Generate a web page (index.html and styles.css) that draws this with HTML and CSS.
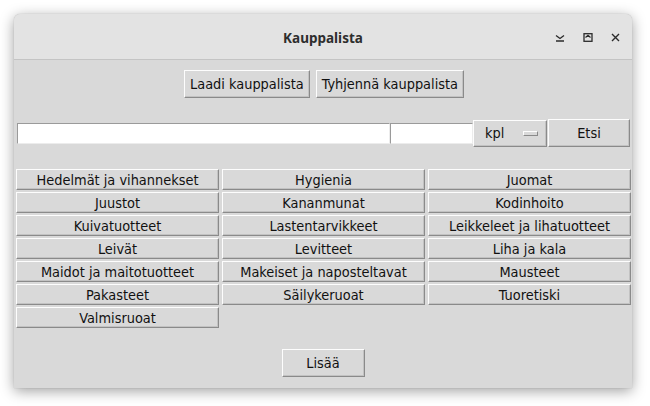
FILE: index.html
```html
<!DOCTYPE html>
<html>
<head>
<meta charset="utf-8">
<link rel="stylesheet" href="styles.css">
</head>
<body>
<div class="window">
  <div class="titlebar">
    <div class="title">Kauppalista</div>
    <div class="controls">
      <svg class="ctl" width="10" height="8" viewBox="0 0 10 8"><path d="M1 1.5 L5 4.5 L9 1.5 M1 7 H9" fill="none" stroke="#2b2b2b" stroke-width="1.3"/></svg>
      <svg class="ctl" width="10" height="9" viewBox="0 0 10 9"><rect x="1" y="0.7" width="8" height="7.6" fill="none" stroke="#2b2b2b" stroke-width="1.3"/><path d="M2.5 4.5 L5 2.2 L7.5 4.5" fill="none" stroke="#2b2b2b" stroke-width="1.2"/></svg>
      <svg class="ctl" width="9" height="9" viewBox="0 0 9 9"><path d="M1 1 L8 8 M8 1 L1 8" fill="none" stroke="#2b2b2b" stroke-width="1.4"/></svg>
    </div>
  </div>
  <div class="content">
    <div class="toprow">
      <button class="btn tall">Laadi kauppalista</button>
      <button class="btn tall">Tyhjennä kauppalista</button>
    </div>
    <div class="searchrow">
      <input class="entry e1" type="text">
      <input class="entry e2" type="text">
      <div class="btn menubtn"><span>kpl</span><span class="ind"></span></div>
      <button class="btn etsi">Etsi</button>
    </div>
    <div class="grid">
      <button class="btn cat">Hedelmät ja vihannekset</button>
      <button class="btn cat">Hygienia</button>
      <button class="btn cat">Juomat</button>
      <button class="btn cat">Juustot</button>
      <button class="btn cat">Kananmunat</button>
      <button class="btn cat">Kodinhoito</button>
      <button class="btn cat">Kuivatuotteet</button>
      <button class="btn cat">Lastentarvikkeet</button>
      <button class="btn cat">Leikkeleet ja lihatuotteet</button>
      <button class="btn cat">Leivät</button>
      <button class="btn cat">Levitteet</button>
      <button class="btn cat">Liha ja kala</button>
      <button class="btn cat">Maidot ja maitotuotteet</button>
      <button class="btn cat">Makeiset ja naposteltavat</button>
      <button class="btn cat">Mausteet</button>
      <button class="btn cat">Pakasteet</button>
      <button class="btn cat">Säilykeruoat</button>
      <button class="btn cat">Tuoretiski</button>
      <button class="btn cat">Valmisruoat</button>
    </div>
    <div class="bottomrow">
      <button class="btn tall lisaa">Lisää</button>
    </div>
  </div>
</div>
</body>
</html>
```

FILE: styles.css
```css
html, body {
  margin: 0;
  padding: 0;
  background: #ffffff;
}
body {
  padding: 14px 0 0 14px;
  width: 650px;
  height: 406px;
  box-sizing: border-box;
  overflow: hidden;
}
.window {
  width: 618px;
  height: 374px;
  background: #d9d9d9;
  border-radius: 6px 6px 0 0;
  box-shadow: 0 3px 14px rgba(0,0,0,0.38), 0 0 1px rgba(0,0,0,0.3);
  display: flex;
  flex-direction: column;
  overflow: hidden;
}
.titlebar {
  height: 46px;
  flex: none;
  background: #e3e3e3;
  border-bottom: 1px solid #c4c4c4;
  box-sizing: border-box;
  position: relative;
  display: flex;
  align-items: center;
  justify-content: center;
}
.title {
  font-family: "Noto Sans", sans-serif;
  font-weight: bold;
  font-size: 13.5px;
  color: #2e2e2e;
  margin-top: 2px;
}
.controls {
  position: absolute;
  right: 12px;
  top: 19px;
  display: flex;
  align-items: center;
  gap: 18px;
}
.ctl { display: block; }
.content {
  flex: 1;
  display: flex;
  flex-direction: column;
  font-family: "DejaVu Sans", sans-serif;
  font-stretch: condensed;
  font-size: 14.4px;
}
.btn {
  font-family: "DejaVu Sans", sans-serif;
  font-stretch: condensed;
  font-size: 14.4px;
  color: #111;
  background: #d9d9d9;
  border: 1px solid;
  border-color: #fdfdfd #8a8a8a #8a8a8a #fdfdfd;
  box-shadow: inset -1px -1px 0 #c2c2c2;
  margin: 0;
  padding: 0;
  box-sizing: border-box;
  display: flex;
  align-items: center;
  justify-content: center;
  white-space: nowrap;
}
.toprow {
  display: flex;
  justify-content: center;
  gap: 6px;
  margin-top: 10px;
  padding-left: 2px;
}
.tall {
  height: 28px;
  padding: 0 5px;
}
.searchrow {
  display: flex;
  align-items: center;
  margin-top: 21px;
  padding-left: 3px;
}
.entry {
  height: 21px;
  box-sizing: border-box;
  background: #fff;
  border: 1px solid;
  border-color: #9a9a9a #ececec #ececec #9a9a9a;
  margin: 0;
  padding: 0;
  outline: none;
}
.e1 { width: 373px; }
.e2 { width: 83px; }
.menubtn {
  width: 74px;
  height: 27px;
  justify-content: space-between;
  padding: 0 8px 0 11px;
}
.ind {
  width: 15px;
  height: 5px;
  box-sizing: border-box;
  border: 1px solid;
  border-color: #fdfdfd #8a8a8a #8a8a8a #fdfdfd;
  background: #d9d9d9;
}
.etsi {
  width: 82px;
  height: 28px;
  margin-left: 1px;
}
.grid {
  display: grid;
  grid-template-columns: repeat(3, 203px);
  grid-auto-rows: 21px;
  column-gap: 3px;
  row-gap: 2px;
  margin-top: 22px;
  padding-left: 2px;
}
.cat {
  height: 21px;
  padding: 0 2px;
}
.bottomrow {
  display: flex;
  justify-content: center;
  margin-top: 21px;
  padding-left: 0;
}
.lisaa {
  width: 83px;
}
```
